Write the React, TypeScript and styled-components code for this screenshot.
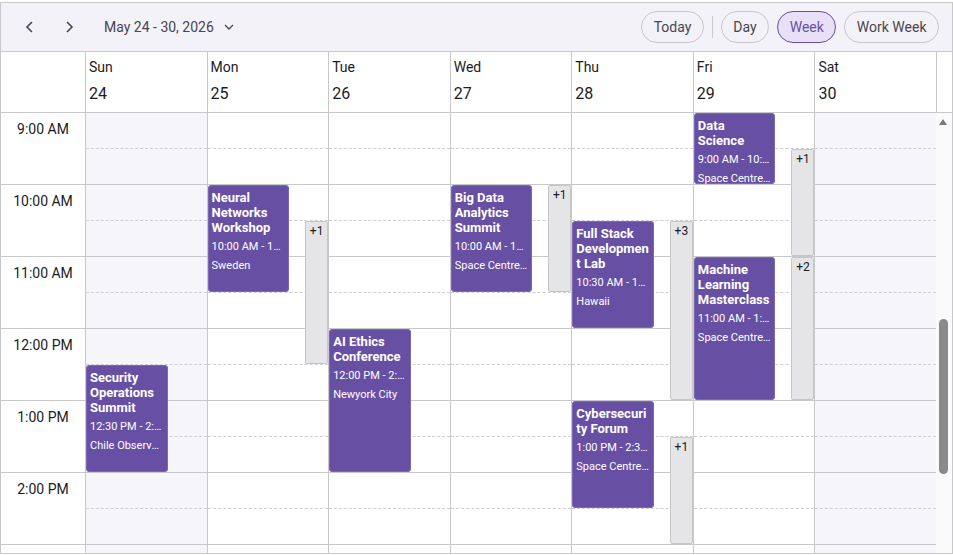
import * as React from "react";
import styled, { createGlobalStyle } from "styled-components";

const GlobalStyle = createGlobalStyle`
  body {
    margin: 0;
    background: #fff;
    font-family: Roboto, "Noto Sans", Arial, sans-serif;
  }
`;

const HOUR = 72;
const FIRST_HOUR = 9;
const LINE = "#c8c8cc";

type CalEvent = {
  day: number;
  start: number;
  end: number;
  title: string;
  time: string;
  location: string;
};

type More = {
  day: number;
  start: number;
  end: number;
  count: number;
};

const days = [
  { name: "Sun", date: 24, weekend: true },
  { name: "Mon", date: 25 },
  { name: "Tue", date: 26 },
  { name: "Wed", date: 27 },
  { name: "Thu", date: 28 },
  { name: "Fri", date: 29 },
  { name: "Sat", date: 30, weekend: true },
];

const hours = ["9:00 AM", "10:00 AM", "11:00 AM", "12:00 PM", "1:00 PM", "2:00 PM", "3:00 PM"];

const events: CalEvent[] = [
  { day: 5, start: 9, end: 10, title: "Data Science", time: "9:00 AM - 10:00 AM", location: "Space Centre USA" },
  { day: 1, start: 10, end: 11.5, title: "Neural Networks Workshop", time: "10:00 AM - 11:30 AM", location: "Sweden" },
  { day: 3, start: 10, end: 11.5, title: "Big Data Analytics Summit", time: "10:00 AM - 11:30 AM", location: "Space Centre USA" },
  { day: 4, start: 10.5, end: 12, title: "Full Stack Development Lab", time: "10:30 AM - 12:00 PM", location: "Hawaii" },
  { day: 5, start: 11, end: 13, title: "Machine Learning Masterclass", time: "11:00 AM - 1:00 PM", location: "Space Centre USA" },
  { day: 2, start: 12, end: 14, title: "AI Ethics Conference", time: "12:00 PM - 2:00 PM", location: "Newyork City" },
  { day: 0, start: 12.5, end: 14, title: "Security Operations Summit", time: "12:30 PM - 2:00 PM", location: "Chile Observatory" },
  { day: 4, start: 13, end: 14.5, title: "Cybersecurity Forum", time: "1:00 PM - 2:30 PM", location: "Space Centre USA" },
];

const more: More[] = [
  { day: 1, start: 10.5, end: 12.5, count: 1 },
  { day: 3, start: 10, end: 11.5, count: 1 },
  { day: 4, start: 10.5, end: 13, count: 3 },
  { day: 4, start: 13.5, end: 15, count: 1 },
  { day: 5, start: 9.5, end: 11, count: 1 },
  { day: 5, start: 11, end: 13, count: 2 },
];

const Scheduler = styled.div`
  margin-top: 2px;
  width: 953px;
  height: 552px;
  box-sizing: border-box;
  border: 1px solid ${LINE};
  display: flex;
  flex-direction: column;
  overflow: hidden;
  color: #1c1b1f;
`;

const Toolbar = styled.div`
  height: 49px;
  flex-shrink: 0;
  box-sizing: border-box;
  border-bottom: 1px solid ${LINE};
  background: #f3f2f8;
  display: flex;
  align-items: center;
  padding: 0 13px 0 12px;
`;

const NavButton = styled.button`
  width: 34px;
  height: 32px;
  border: none;
  background: transparent;
  display: flex;
  align-items: center;
  justify-content: center;
  padding: 0;
  color: #49454f;
  & + & {
    margin-left: 5px;
  }
`;

const DateRange = styled.button`
  margin-left: 10px;
  height: 32px;
  border: none;
  background: transparent;
  display: flex;
  align-items: center;
  gap: 10px;
  padding: 0 8px;
  font-family: inherit;
  font-size: 14px;
  color: #49454f;
`;

const Spacer = styled.div`
  flex: 1;
`;

const ViewButton = styled.button<{ $active?: boolean }>`
  height: 32px;
  padding: 0 11.5px;
  border-radius: 16px;
  box-sizing: border-box;
  border: 1px solid ${(p) => (p.$active ? "#6750a4" : "#c9c7cc")};
  background: ${(p) => (p.$active ? "#e8e0f6" : "transparent")};
  color: ${(p) => (p.$active ? "#6750a4" : "#49454f")};
  font-family: inherit;
  font-size: 14px;
  margin-left: 8px;
`;

const Divider = styled.div`
  width: 1px;
  height: 22px;
  background: #c9c7cc;
  margin-left: 8px;
`;

const Columns = styled.div`
  display: grid;
  grid-template-columns: 84px repeat(7, 1fr) 16px;
`;

const HeaderRow = styled(Columns)`
  height: 61px;
  flex-shrink: 0;
  box-sizing: border-box;
  border-bottom: 1px solid ${LINE};
`;

const HeaderCell = styled.div`
  border-left: 1px solid ${LINE};
  padding: 5px 0 0 3px;
  display: flex;
  flex-direction: column;
`;

const DayName = styled.span`
  font-size: 14px;
  line-height: 20px;
`;

const DayDate = styled.span`
  margin-top: 6px;
  font-size: 16px;
  line-height: 22px;
`;

const HeaderGutter = styled.div`
  border-left: 1px solid ${LINE};
`;

const Body = styled(Columns)`
  flex: 1;
  overflow: hidden;
`;

const TimeColumn = styled.div`
  display: flex;
  flex-direction: column;
`;

const TimeCell = styled.div`
  height: ${HOUR}px;
  flex-shrink: 0;
  box-sizing: border-box;
  border-bottom: 1px solid ${LINE};
  text-align: center;
  font-size: 14px;
  line-height: 20px;
  padding-top: 6px;
`;

const DayColumn = styled.div<{ $weekend?: boolean }>`
  position: relative;
  border-left: 1px solid ${LINE};
  background: ${(p) => (p.$weekend ? "#f5f5fa" : "#fff")};
  display: flex;
  flex-direction: column;
`;

const Slot = styled.div<{ $half?: boolean }>`
  height: ${HOUR / 2}px;
  flex-shrink: 0;
  box-sizing: border-box;
  border-bottom: 1px ${(p) => (p.$half ? "dashed #cfcfd3" : `solid ${LINE}`)};
`;

const EventCard = styled.div`
  position: absolute;
  left: 0;
  width: calc(100% - 39px);
  box-sizing: border-box;
  padding: 5px 4px 0;
  background: #6750a4;
  box-shadow: inset 0 0 0 1px #7b68b1;
  border-radius: 4px;
  color: #fff;
  overflow: hidden;
`;

const EventTitle = styled.div`
  font-size: 13px;
  font-weight: 700;
  line-height: 15px;
  overflow-wrap: anywhere;
`;

const EventLine = styled.div<{ $gap: number }>`
  margin-top: ${(p) => p.$gap}px;
  font-size: 11px;
  line-height: 14px;
  white-space: nowrap;
  overflow: hidden;
  text-overflow: ellipsis;
`;

const MoreIndicator = styled.div`
  position: absolute;
  right: 0;
  width: 23px;
  box-sizing: border-box;
  padding-top: 2px;
  background: #e5e5e8;
  border: 1px solid #c6c6c8;
  border-radius: 2px;
  font-size: 12px;
  line-height: 14px;
  text-align: center;
  color: #1c1b1f;
`;

const ScrollTrack = styled.div`
  position: relative;
  background: #fafafa;
`;

const ScrollArrow = styled.svg`
  display: block;
  margin: 6px 0 0 3px;
`;

const ScrollThumb = styled.div`
  position: absolute;
  left: 3px;
  width: 9px;
  border-radius: 5px;
  background: #8a8a8a;
`;

const Chevron = ({ dir }: { dir: "left" | "right" | "down" }) => {
  if (dir === "down") {
    return (
      <svg width="10" height="6" viewBox="0 0 10 6">
        <polyline points="1,1 5,5 9,1" fill="none" stroke="#49454f" strokeWidth="1.3" />
      </svg>
    );
  }
  return (
    <svg width="10" height="12" viewBox="0 0 10 12">
      <polyline
        points={dir === "left" ? "7,1 2,6 7,11" : "3,1 8,6 3,11"}
        fill="none"
        stroke="#49454f"
        strokeWidth="1.6"
      />
    </svg>
  );
};

const toTop = (h: number) => (h - FIRST_HOUR) * HOUR;

const App = () => {
  return (
    <>
      <GlobalStyle />
      <Scheduler>
        <Toolbar>
          <NavButton>
            <Chevron dir="left" />
          </NavButton>
          <NavButton>
            <Chevron dir="right" />
          </NavButton>
          <DateRange>
            May 24 - 30, 2026
            <Chevron dir="down" />
          </DateRange>
          <Spacer />
          <ViewButton>Today</ViewButton>
          <Divider />
          <ViewButton>Day</ViewButton>
          <ViewButton $active>Week</ViewButton>
          <ViewButton>Work Week</ViewButton>
        </Toolbar>

        <HeaderRow>
          <div />
          {days.map((d) => (
            <HeaderCell key={d.name}>
              <DayName>{d.name}</DayName>
              <DayDate>{d.date}</DayDate>
            </HeaderCell>
          ))}
          <HeaderGutter />
        </HeaderRow>

        <Body>
          <TimeColumn>
            {hours.map((h) => (
              <TimeCell key={h}>{h}</TimeCell>
            ))}
          </TimeColumn>
          {days.map((d, di) => (
            <DayColumn key={d.name} $weekend={d.weekend}>
              {hours.map((h) => (
                <React.Fragment key={h}>
                  <Slot $half />
                  <Slot />
                </React.Fragment>
              ))}
              {more
                .filter((m) => m.day === di)
                .map((m, i) => (
                  <MoreIndicator
                    key={"m" + i}
                    style={{ top: toTop(m.start), height: (m.end - m.start) * HOUR - 1 }}
                  >
                    +{m.count}
                  </MoreIndicator>
                ))}
              {events
                .filter((e) => e.day === di)
                .map((e) => (
                  <EventCard
                    key={e.title}
                    style={{ top: toTop(e.start), height: (e.end - e.start) * HOUR - 1 }}
                  >
                    <EventTitle>{e.title}</EventTitle>
                    <EventLine $gap={5}>{e.time}</EventLine>
                    <EventLine $gap={5}>{e.location}</EventLine>
                  </EventCard>
                ))}
            </DayColumn>
          ))}
          <ScrollTrack>
            <ScrollArrow width="8" height="6" viewBox="0 0 8 6">
              <polygon points="0,6 4,0 8,6" fill="#7a7a7a" />
            </ScrollArrow>
            <ScrollThumb style={{ top: 206, height: 155 }} />
          </ScrollTrack>
        </Body>
      </Scheduler>
    </>
  );
};

export default App;
